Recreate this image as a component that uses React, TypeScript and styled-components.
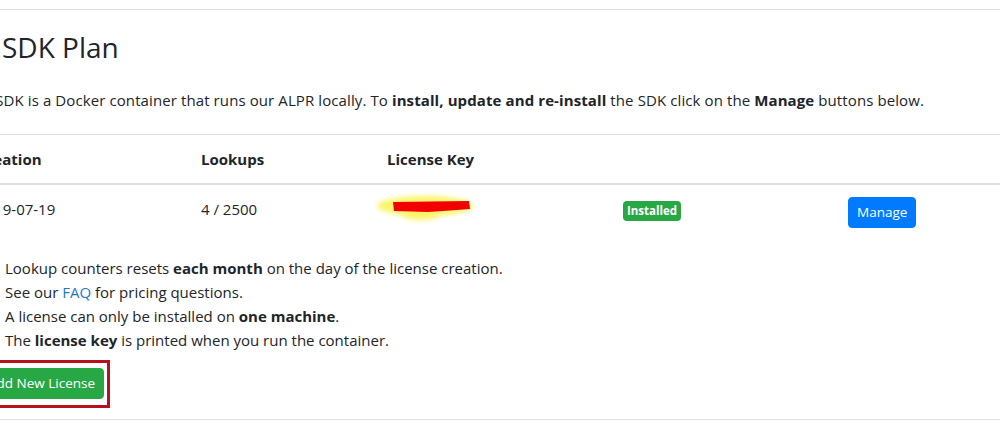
import React from "react";
import styled, { createGlobalStyle } from "styled-components";

const Global = createGlobalStyle`
  html, body { margin: 0; padding: 0; background: #fff; overflow: hidden; }
  body {
    font-family: "Open Sans", "Noto Sans", sans-serif;
    font-size: 15px;
    line-height: 24px;
    color: #212529;
  }
`;

const Page = styled.div`
  width: 1000px;
  height: 433px;
  overflow: hidden;
  padding-top: 9px;
  box-sizing: border-box;
`;

const Rule = styled.div`
  height: 1px;
  background: #dee2e6;
`;

const Content = styled.div`
  margin-left: -35px;
  width: 1100px;
`;

const Heading = styled.h3`
  margin: 20px 0 0 37px;
  font-size: 28px;
  font-weight: 500;
  line-height: 35px;
`;

const Intro = styled.p`
  margin: 23px 0 22px;
  letter-spacing: 0.1px;
`;

const Table = styled.table`
  border-collapse: collapse;
  width: 1100px;
  margin-bottom: 16px;
  table-layout: fixed;
`;

const Th = styled.th<{ $w?: number }>`
  box-sizing: border-box;
  text-align: left;
  font-weight: 700;
  padding: 12px;
  border-top: 1px solid #dee2e6;
  border-bottom: 2px solid #dee2e6;
  width: ${(p) => (p.$w ? `${p.$w}px` : "auto")};
  vertical-align: bottom;
`;

const Td = styled.td`
  padding: 12px;
  vertical-align: top;
`;

const Badge = styled.span`
  display: inline-block;
  background: #28a745;
  color: #fff;
  font-size: 11.5px;
  font-weight: 700;
  line-height: 1;
  padding: 4px 4px;
  border-radius: 4px;
  margin-top: 2px;
`;

const Button = styled.button<{ $variant: "primary" | "success" }>`
  font-family: inherit;
  font-size: 13.5px;
  line-height: 21px;
  padding: 4px 8px;
  border: 1px solid ${(p) => (p.$variant === "primary" ? "#007bff" : "#28a745")};
  background: ${(p) => (p.$variant === "primary" ? "#007bff" : "#28a745")};
  color: #fff;
  border-radius: 4px;
  cursor: pointer;
`;

const List = styled.ul`
  margin: 0 0 16px;
  padding-left: 40px;
`;

const Link = styled.a`
  color: #2479c2;
  text-decoration: none;
`;

const Annotated = styled.div`
  position: relative;
  display: inline-block;
  margin-left: 14px;
`;

const Highlight = styled.div`
  position: absolute;
  inset: -8px -6px -9px -6px;
  border: 3px solid #b5121b;
  pointer-events: none;
`;

const BottomRule = styled(Rule)`
  margin-top: 20px;
`;

const Redacted = () => (
  <svg width="110" height="34" viewBox="0 0 110 34" style={{ display: "block", marginTop: -6, marginLeft: -14 }}>
    <defs>
      <filter id="blur" x="-20%" y="-50%" width="140%" height="200%">
        <feGaussianBlur stdDeviation="2.5" />
      </filter>
    </defs>
    <g filter="url(#blur)">
      <ellipse cx="52" cy="15" rx="48" ry="10" fill="#fbf56a" />
      <ellipse cx="48" cy="23" rx="20" ry="6" fill="#fbf56a" />
    </g>
    <path d="M20 11 L96 10 L97 18 L70 20 L55 21 L21 20 Z" fill="#f20000" />
  </svg>
);

export default function App() {
  return (
    <Page>
      <Global />
      <Rule />
      <Content>
        <Heading>SDK Plan</Heading>
        <Intro>
          The SDK is a Docker container that runs our ALPR locally. To <b>install, update and re-install</b> the SDK
          click on the <b>Manage</b> buttons below.
        </Intro>
        <Table>
          <thead>
            <tr>
              <Th $w={224}>Creation</Th>
              <Th $w={186}>Lookups</Th>
              <Th $w={236}>License Key</Th>
              <Th $w={225}></Th>
              <Th></Th>
            </tr>
          </thead>
          <tbody>
            <tr>
              <Td>2019-07-19</Td>
              <Td>4 / 2500</Td>
              <Td>
                <Redacted />
              </Td>
              <Td>
                <Badge>Installed</Badge>
              </Td>
              <Td>
                <Button $variant="primary">Manage</Button>
              </Td>
            </tr>
          </tbody>
        </Table>
        <List>
          <li>
            Lookup counters resets <b>each month</b> on the day of the license creation.
          </li>
          <li>
            See our <Link href="#">FAQ</Link> for pricing questions.
          </li>
          <li>
            A license can only be installed on <b>one machine</b>.
          </li>
          <li>
            The <b>license key</b> is printed when you run the container.
          </li>
        </List>
        <Annotated>
          <Button $variant="success">Add New License</Button>
          <Highlight />
        </Annotated>
      </Content>
      <BottomRule />
    </Page>
  );
}
